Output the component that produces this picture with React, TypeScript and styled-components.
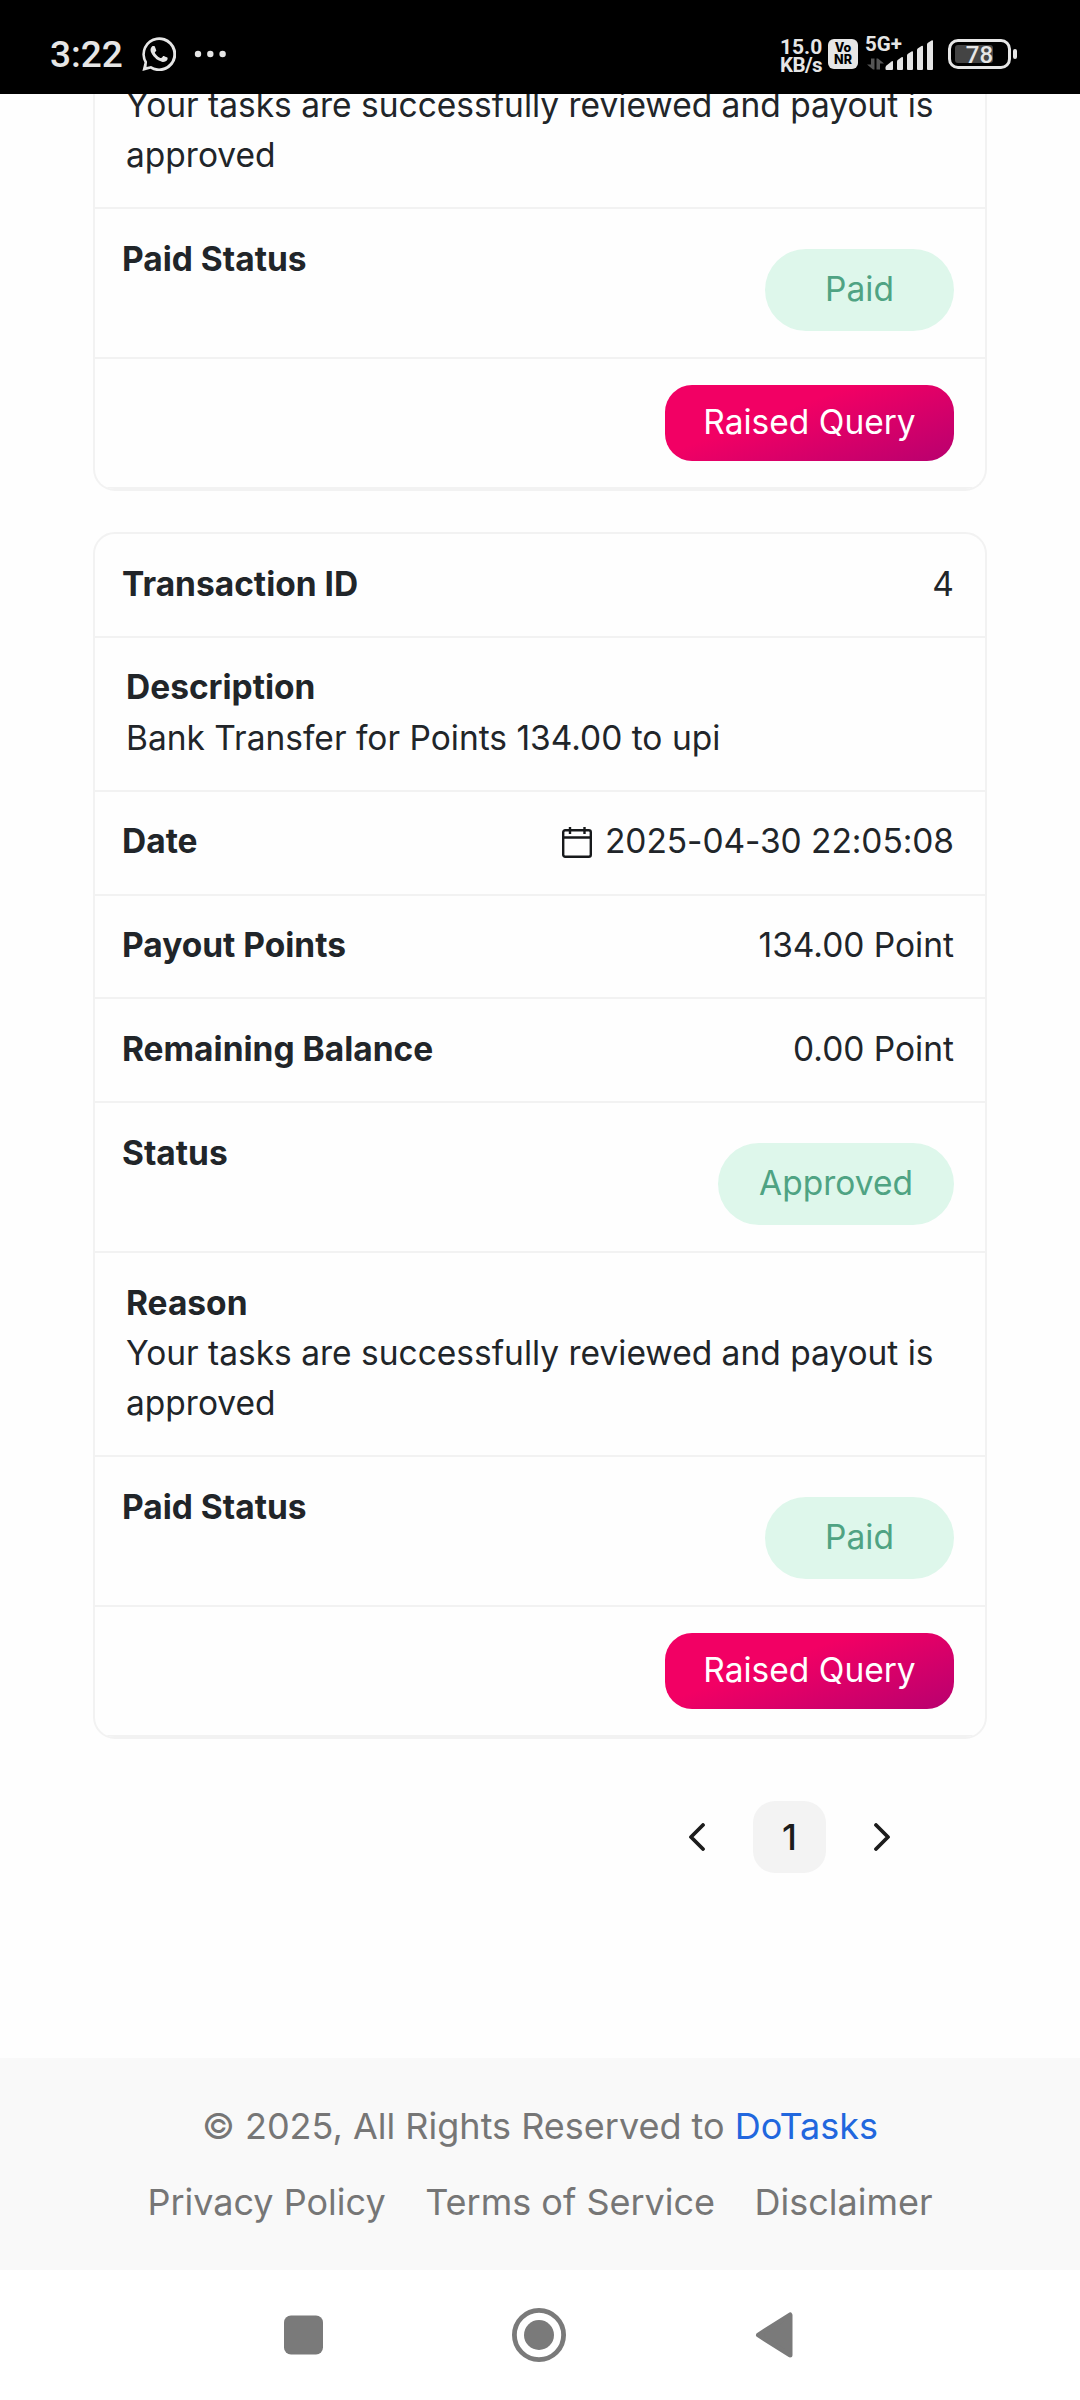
import React from "react";
import styled, { createGlobalStyle } from "styled-components";

const GlobalStyle = createGlobalStyle`
  *, *::before, *::after { box-sizing: border-box; }
  body {
    margin: 0;
    background: #fefefe;
    color: #212529;
    font-family: Inter, "Liberation Sans", sans-serif;
    font-size: 33.5px;
    line-height: 50px;
  }
`;

const Screen = styled.div`
  width: 1080px;
  height: 2400px;
  display: flex;
  flex-direction: column;
  overflow: hidden;
`;

/* ---------- status bar ---------- */

const StatusBar = styled.header`
  flex: none;
  height: 94px;
  padding: 14px 63px 0 50px;
  display: flex;
  justify-content: space-between;
  align-items: center;
  background: #000;
  color: #e6e6e6;
  font-family: Roboto, sans-serif;
`;

const StatusGroup = styled.div`
  display: flex;
  align-items: center;
`;

const Clock = styled.span`
  width: 92px;
  padding-top: 2px;
  font-size: 37px;
  font-weight: 500;
  line-height: 44px;
`;

const Dots = styled.svg`
  margin-left: 18px;
`;

const NetSpeed = styled.div`
  width: 48px;
  padding-top: 4px;
  display: flex;
  flex-direction: column;
  font-size: 21px;
  font-weight: 700;
  line-height: 18px;
`;

const NetUnit = styled.span`
  font-size: 20.5px;
  letter-spacing: -0.6px;
`;

const VoiceBadge = styled.div`
  width: 30px;
  height: 30px;
  padding-top: 3px;
  border-radius: 6px;
  background: #e6e6e6;
  color: #000;
  font: 800 12.5px/12px Inter, sans-serif;
  text-align: center;
`;

const Signal = styled.div`
  width: 70px;
  height: 36px;
  margin: 0 13px 2px 7px;
  position: relative;
`;

const SignalLabel = styled.span`
  position: absolute;
  left: 0;
  top: 0;
  font-size: 20.5px;
  font-weight: 700;
  line-height: 18px;
`;

const SignalBars = styled.svg`
  display: block;
`;

const Battery = styled.div`
  width: 63px;
  height: 30px;
  padding: 3px 4px;
  position: relative;
  border: 3px solid #e6e6e6;
  border-radius: 10px;
`;

const BatteryFill = styled.div`
  width: 38px;
  height: 18px;
  border-radius: 3px;
  background: #444;
`;

const BatteryText = styled.span`
  position: absolute;
  inset: 0;
  font-size: 24px;
  font-weight: 500;
  line-height: 26px;
  text-align: center;
`;

const BatteryTip = styled.div`
  width: 4px;
  height: 10px;
  margin-left: 2px;
  border-radius: 2px;
  background: #e6e6e6;
`;

/* ---------- transactions ---------- */

const Content = styled.main`
  flex: none;
  height: 1964px;
  padding: 0 93px;
  display: flex;
  flex-direction: column;
  overflow: hidden;
`;

const Card = styled.section<{ $cut?: boolean }>`
  flex: none;
  border: 2px solid #f2f2f2;
  border-radius: 22px;
  overflow: hidden;
  ${(p) =>
    p.$cut &&
    `
    border-top: 0;
    border-top-left-radius: 0;
    border-top-right-radius: 0;
    margin-bottom: 41px;
  `}
`;

const Row = styled.div<{ $h: number; $top?: number }>`
  height: ${(p) => p.$h}px;
  padding: ${(p) => p.$top ?? 25}px 31px 0 27px;
  display: flex;
  justify-content: space-between;
  align-items: flex-start;
  border-bottom: 2px solid #f2f2f2;
`;

const StackRow = styled.div<{ $h: number; $gap?: number }>`
  height: ${(p) => p.$h}px;
  padding: 0 20px 27px 31px;
  display: flex;
  flex-direction: column;
  justify-content: flex-end;
  gap: ${(p) => p.$gap ?? 0}px;
  border-bottom: 2px solid #f2f2f2;
`;

const Label = styled.strong`
  font-weight: 700;
`;

const Value = styled.span<{ $tight?: boolean }>`
  display: flex;
  align-items: center;
  letter-spacing: ${(p) => (p.$tight ? "-0.07px" : "0")};
`;

const Paragraph = styled.p`
  margin: 0;
`;

const CalendarIcon = styled.svg`
  margin: 3px 12px 0 0;
`;

const Pill = styled.span<{ $w: number }>`
  width: ${(p) => p.$w}px;
  height: 82px;
  margin-top: 15px;
  border-radius: 41px;
  background: #def7eb;
  color: #4fa383;
  line-height: 80px;
  text-align: center;
`;

const QueryButton = styled.button`
  width: 289px;
  height: 76px;
  margin: 1px 0 0 auto;
  padding: 0 0 2px;
  border: 0;
  border-radius: 27px;
  background: linear-gradient(160deg, #f20064 0%, #f20064 38%, #b8006f 100%);
  color: #fff;
  font: inherit;
`;

const Pagination = styled.nav`
  margin: 62px 96px 0 auto;
  height: 72px;
  display: flex;
  align-items: center;
  gap: 47px;
`;

const Page = styled.span`
  width: 73px;
  height: 72px;
  border-radius: 22px;
  background: #f3f3f3;
  color: #1c1c1c;
  font-size: 36px;
  font-weight: 500;
  line-height: 72px;
  text-align: center;
`;

/* ---------- footer ---------- */

const Footer = styled.footer`
  flex: none;
  height: 212px;
  padding-top: 41px;
  display: flex;
  flex-direction: column;
  align-items: center;
  gap: 22px;
  background: #f9f9f9;
  color: #767676;
  font-size: 36px;
  line-height: 54px;
`;

const FooterLinks = styled.div`
  display: flex;
  gap: 39.5px;
`;

const FooterLink = styled.a<{ $brand?: boolean }>`
  color: ${(p) => (p.$brand ? "#2167de" : "inherit")};
  text-decoration: none;
`;

const SystemNav = styled.nav`
  flex: 1;
  padding: 0 287px 0 284px;
  display: flex;
  align-items: center;
  justify-content: space-between;
  background: #fff;
`;

function SignalIcon() {
  return (
    <SignalBars width="70" height="36" viewBox="0 0 70 36" fill="#e6e6e6">
      <path d="M6 23.500h3.500V34.500H8L2 29.500H6zM15 34.500H11.500V23.500H13l6 5H15z" fill="#555" />
      <path d="M20.500 34v-1.500q0-1 1-2l5-4q1.500-1 1.500.5v7q0 1-1 1h-5.500q-1 0-1-1z" />
      <path d="M32 34V26.500q0-1 1-1.800l3.500-2.400q1.500-1 1.500.7V34q0 1-1 1h-4q-1 0-1-1z" />
      <path d="M42 34V20.500q0-1 1-1.700l3.500-2.300q1.500-1 1.500.7V34q0 1-1 1h-4q-1 0-1-1z" />
      <path d="M52 34V15q0-1 1-1.700l3.500-2.300q1.500-1 1.500.7V34q0 1-1 1h-4q-1 0-1-1z" />
      <path d="M62 34V9.500q0-1 1-1.700l3.500-2.300q1.500-1 1.500.7V34q0 1-1 1h-4q-1 0-1-1z" />
    </SignalBars>
  );
}

function PayoutRows() {
  return (
    <>
      <Row $h={150}>
        <Label>Paid Status</Label>
        <Pill $w={189}>Paid</Pill>
      </Row>
      <Row $h={130}>
        <QueryButton>Raised Query</QueryButton>
      </Row>
    </>
  );
}

export default function App() {
  return (
    <Screen>
      <GlobalStyle />
      <StatusBar>
        <StatusGroup>
          <Clock>3:22</Clock>
          <svg width="34" height="34" viewBox="0 0 24 24" fill="#e6e6e6">
            <path d="M17.472 14.382c-.297-.149-1.758-.867-2.030-.967-.273-.099-.471-.148-.670.150-.197.297-.767.966-.940 1.164-.173.199-.347.223-.644.075-.297-.150-1.255-.463-2.390-1.475-.883-.788-1.480-1.761-1.653-2.059-.173-.297-.018-.458.130-.606.134-.133.298-.347.446-.520.149-.174.198-.298.298-.497.099-.198.050-.371-.025-.520-.075-.149-.669-1.612-.916-2.207-.242-.579-.487-.500-.669-.510-.173-.008-.371-.010-.570-.010-.198 0-.520.074-.792.372-.272.297-1.040 1.016-1.040 2.479 0 1.462 1.065 2.875 1.213 3.074.149.198 2.096 3.200 5.077 4.487.709.306 1.262.489 1.694.625.712.227 1.360.195 1.871.118.571-.085 1.758-.719 2.006-1.413.248-.694.248-1.289.173-1.413-.074-.124-.272-.198-.570-.347zM.3 24l1.450-6A12 12 0 1 1 6 22.400zM3.200 21.200l3.200-.800A10 10 0 1 0 3.600 17.500z" fillRule="evenodd" />
          </svg>
          <Dots width="32" height="8" viewBox="0 0 32 8" fill="#e6e6e6">
            <circle cx="4" cy="4" r="3.200" />
            <circle cx="16.300" cy="4" r="3.200" />
            <circle cx="28.600" cy="4" r="3.200" />
          </Dots>
        </StatusGroup>
        <StatusGroup>
          <NetSpeed>
            <span>15.0</span>
            <NetUnit>KB/s</NetUnit>
          </NetSpeed>
          <VoiceBadge>
            Vo
            <br />
            NR
          </VoiceBadge>
          <Signal>
            <SignalIcon />
            <SignalLabel>5G+</SignalLabel>
          </Signal>
          <Battery>
            <BatteryFill />
            <BatteryText>78</BatteryText>
          </Battery>
          <BatteryTip />
        </StatusGroup>
      </StatusBar>

      <Content>
        <Card $cut>
          <StackRow $h={115}>
            <Paragraph>Your tasks are successfully reviewed and payout is approved</Paragraph>
          </StackRow>
          <PayoutRows />
        </Card>

        <Card>
          <Row $h={104}>
            <Label>Transaction ID</Label>
            <Value>4</Value>
          </Row>
          <StackRow $h={154} $gap={1}>
            <Label>Description</Label>
            <Paragraph>Bank Transfer for Points 134.00 to upi</Paragraph>
          </StackRow>
          <Row $h={104} $top={24}>
            <Label>Date</Label>
            <Value $tight>
              <CalendarIcon width="32" height="33" viewBox="0 0 32 33" fill="none" stroke="#17191b" strokeWidth="2.400">
                <rect x="2.200" y="4.200" width="27.600" height="26.600" rx="2" />
                <path d="M2 11.500H30M9 1v7M23.500 1v7" />
              </CalendarIcon>
              2025-04-30 22:05:08
            </Value>
          </Row>
          <Row $h={103} $top={24}>
            <Label>Payout Points</Label>
            <Value>134.00 Point</Value>
          </Row>
          <Row $h={104}>
            <Label>Remaining Balance</Label>
            <Value>0.00 Point</Value>
          </Row>
          <Row $h={150}>
            <Label>Status</Label>
            <Pill $w={236}>Approved</Pill>
          </Row>
          <StackRow $h={204}>
            <Label>Reason</Label>
            <Paragraph>Your tasks are successfully reviewed and payout is approved</Paragraph>
          </StackRow>
          <PayoutRows />
        </Card>

        <Pagination>
          <svg width="18" height="28" viewBox="0 0 18 28" fill="none" stroke="#1c1c1c" strokeWidth="3.800" strokeLinecap="round" strokeLinejoin="round">
            <path d="M15 2L3 14L15 26" />
          </svg>
          <Page>1</Page>
          <svg width="18" height="28" viewBox="0 0 18 28" fill="none" stroke="#1c1c1c" strokeWidth="3.800" strokeLinecap="round" strokeLinejoin="round">
            <path d="M3 2L15 14L3 26" />
          </svg>
        </Pagination>
      </Content>

      <Footer>
        <div>
          © 2025, All Rights Reserved to <FooterLink $brand>DoTasks</FooterLink>
        </div>
        <FooterLinks>
          <FooterLink>Privacy Policy</FooterLink>
          <FooterLink>Terms of Service</FooterLink>
          <FooterLink>Disclaimer</FooterLink>
        </FooterLinks>
      </Footer>

      <SystemNav>
        <svg width="39" height="40" viewBox="0 0 39 40" fill="#7a7a7a">
          <rect x="0" y="0.500" width="39" height="39" rx="7" />
        </svg>
        <svg width="56" height="56" viewBox="0 0 56 56" fill="#7a7a7a">
          <circle cx="28" cy="28" r="24.600" fill="none" stroke="#7a7a7a" strokeWidth="4.800" />
          <circle cx="28" cy="28" r="15" />
        </svg>
        <svg width="38" height="46" viewBox="0 0 38 46" fill="#7a7a7a" stroke="#7a7a7a" strokeWidth="5" strokeLinejoin="round">
          <path d="M35 3V43L3.500 23z" />
        </svg>
      </SystemNav>
    </Screen>
  );
}
